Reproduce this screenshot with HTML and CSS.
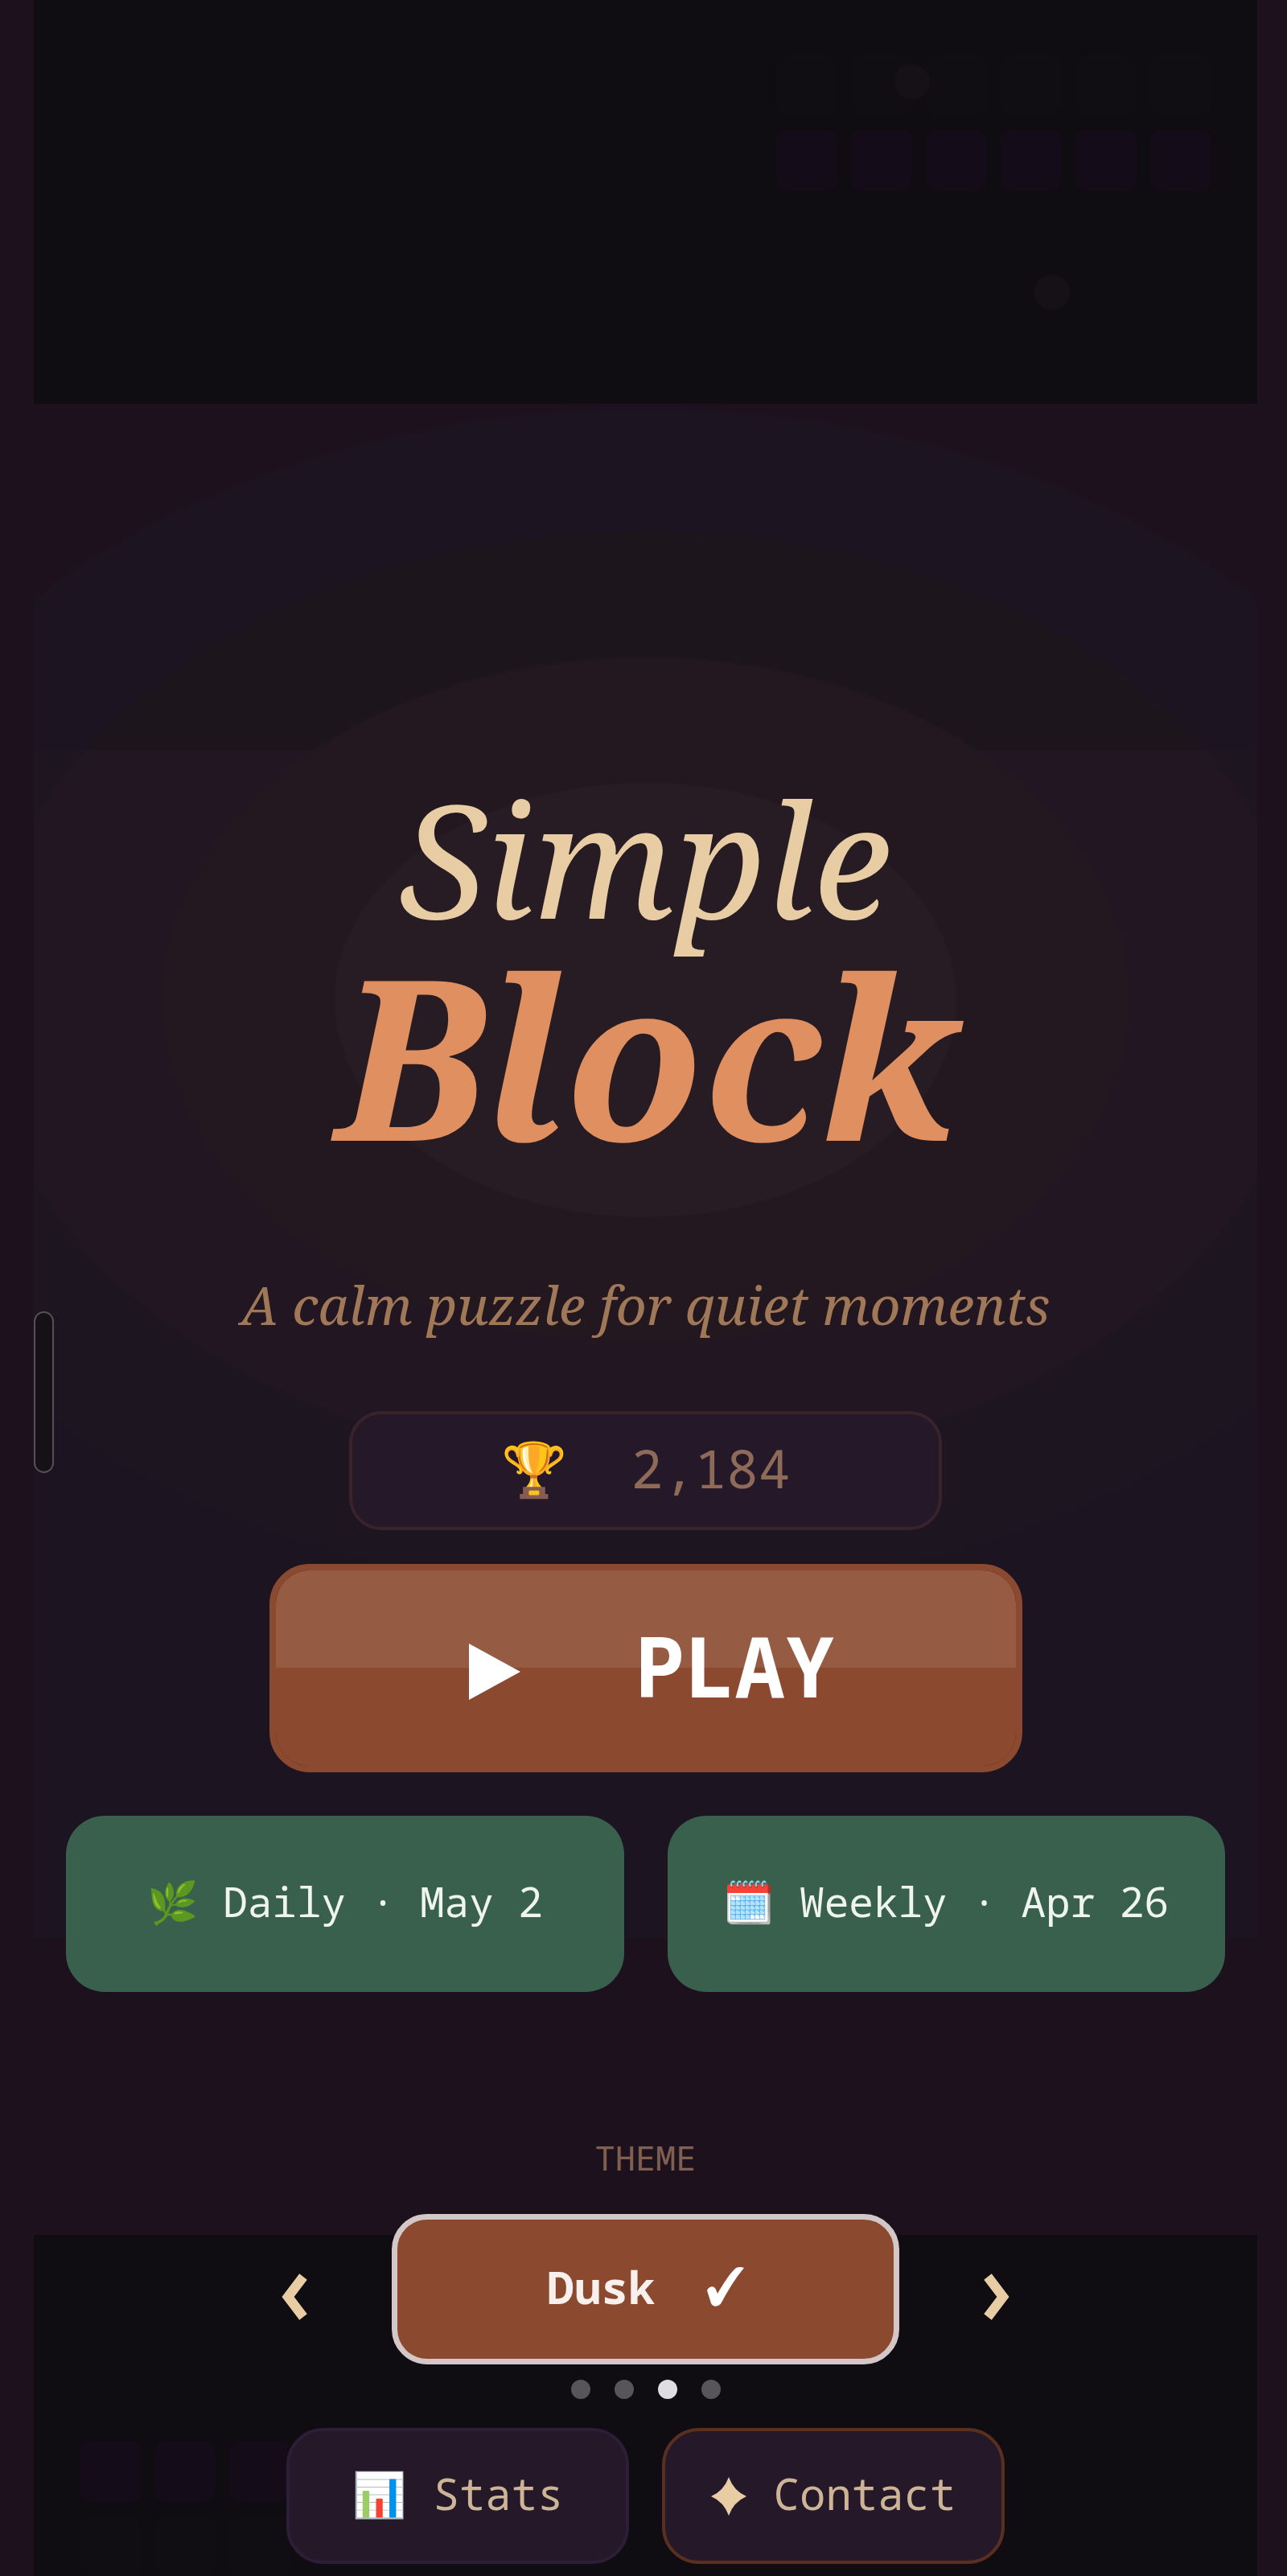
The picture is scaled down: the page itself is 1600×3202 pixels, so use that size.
FILE: index.html
```html
<!DOCTYPE html>
<html lang="en">

<head>
    <meta charset="UTF-8">
    <meta name="viewport" content="width=device-width, initial-scale=1.0">
    <title>Simple Block</title>
    <link rel="stylesheet" href="styles.css">
</head>

<body>
    <main class="stage">
        <!-- Background decoration -->
        <div class="decor" aria-hidden="true">
            <div class="shade shade-top"></div>
            <div class="glow"></div>
            <div class="shade shade-bottom"></div>
            <div class="blocks blocks-top">
                <i></i><i></i><i></i><i></i><i></i><i></i>
                <i class="lit"></i><i class="lit"></i><i class="lit"></i><i class="lit"></i><i class="lit"></i><i class="lit"></i>
            </div>
            <div class="blocks blocks-bottom">
                <i class="lit"></i><i class="lit"></i><i class="lit"></i>
                <i></i><i></i><i></i>
            </div>
            <span class="spark spark-one"></span>
            <span class="spark spark-two"></span>
        </div>
        <div class="handle"></div>

        <!-- Title -->
        <h1 class="title">
            <span class="title-simple">Simple</span>
            <span class="title-block">Block</span>
        </h1>
        <p class="tagline">A calm puzzle for quiet moments</p>

        <!-- Best score -->
        <div class="score">
            <span class="emoji">🏆</span>
            <span>2,184</span>
        </div>

        <button type="button" class="play">
            <svg class="play-icon" viewBox="0 0 64 70"><path d="M0 0L64 35L0 70Z" fill="#fff"/></svg>
            <span>PLAY</span>
        </button>

        <div class="challenges">
            <button type="button" class="challenge"><span class="emoji">🌿</span> Daily · May 2</button>
            <button type="button" class="challenge"><span class="emoji">🗓️</span> Weekly · Apr 26</button>
        </div>

        <!-- Theme picker -->
        <h2 class="theme-label">THEME</h2>
        <div class="theme-picker">
            <button type="button" class="arrow" aria-label="Previous theme">
                <svg viewBox="0 0 32 58"><path d="M27 4L8 29L27 54" fill="none" stroke="#e8cda4" stroke-width="12"/></svg>
            </button>
            <button type="button" class="theme">
                <span>Dusk</span>
                <svg class="check" viewBox="0 0 46 50"><path d="M0 30C3 24 9 24 11 29L13 34C20 22 28 9 36 2Q41 0 46 2C35 15 26 30 18 45C15 51 7 51 5 46Z" fill="#fff"/></svg>
            </button>
            <button type="button" class="arrow" aria-label="Next theme">
                <svg viewBox="0 0 32 58"><path d="M5 4L24 29L5 54" fill="none" stroke="#e8cda4" stroke-width="12"/></svg>
            </button>
        </div>
        <div class="dots">
            <span></span><span></span><span class="active"></span><span></span>
        </div>

        <!-- Footer buttons -->
        <div class="links">
            <button type="button" class="link"><span class="emoji">📊</span><span>Stats</span></button>
            <button type="button" class="link link-contact">
                <svg class="star" viewBox="0 0 44 48"><path d="M22 0Q28 17 44 24Q28 31 22 48Q16 31 0 24Q16 17 22 0Z" fill="#e8cda4"/></svg>
                <span>Contact</span>
            </button>
        </div>
    </main>
</body>

</html>
```

FILE: styles.css
```css
* {
    box-sizing: border-box;
}

body {
    margin: 0;
    background: #1e111e;
    font-family: "Noto Sans Mono", "DejaVu Sans Mono", "Liberation Mono", monospace;
}

button {
    margin: 0;
    padding: 0;
    border: none;
    font-family: inherit;
    cursor: pointer;
}

svg {
    display: block;
}

.stage {
    position: relative;
    display: flex;
    flex-direction: column;
    align-items: center;
    min-height: 100vh;
    margin: 0 37px 0 42px;
    padding: 946px 40px 15px;
}

/* Background decoration */
.decor {
    position: absolute;
    inset: 0;
    overflow: hidden;
}

.shade {
    position: absolute;
    left: 0;
    right: 0;
    background: #100d12;
}

.shade-top {
    top: 0;
    height: 502px;
}

.shade-bottom {
    bottom: 0;
    height: 424px;
}

/* Stepped rings, the lower part is a bit lighter */
.glow {
    position: absolute;
    top: 502px;
    left: 0;
    right: 0;
    height: 1908px;
    background:
        radial-gradient(388px 271px at 50% 741px, #271c24 99%, transparent 100%),
        radial-gradient(604px 428px at 50% 741px, #23181f 99%, transparent 100%),
        radial-gradient(826px 584px at 50% 311px, #221622 99%, transparent 100%) 0 430px no-repeat,
        radial-gradient(1040px 738px at 50% 311px, #1d1621 99%, transparent 100%) 0 430px no-repeat,
        radial-gradient(826px 584px at 50% 741px, #1c161c 99%, transparent 100%),
        linear-gradient(transparent 430px, #1c1421 430px),
        radial-gradient(1040px 738px at 50% 741px, #1c1420 99%, transparent 100%);
}

.blocks {
    position: absolute;
    display: grid;
    gap: 17px;
}

.blocks i {
    width: 76px;
    height: 76px;
    border-radius: 14px;
    background: #110e13;
}

.blocks i.lit {
    background: #150c19;
}

.blocks-top {
    top: 68px;
    right: 57px;
    grid-template-columns: repeat(6, 76px);
}

.blocks-bottom {
    bottom: -1px;
    left: 57px;
    grid-template-columns: repeat(3, 76px);
}

.spark {
    position: absolute;
    width: 44px;
    height: 44px;
    border-radius: 50%;
    background: #161116;
}

.spark-one {
    top: 80px;
    right: 407px;
}

.spark-two {
    top: 341px;
    right: 233px;
}

.handle {
    position: absolute;
    top: 1630px;
    left: 0;
    width: 25px;
    height: 201px;
    border: 2px solid #554f57;
    border-radius: 13px;
    background: #161116;
}

/* Title */
.title {
    position: relative;
    margin: 0;
    font-family: "Noto Serif", "DejaVu Serif", serif;
    font-style: italic;
    text-align: center;
}

.title span {
    display: block;
}

.title-simple {
    font-size: 196px;
    line-height: 240px;
    font-weight: 400;
    color: #e8cda4;
}

.title-block {
    font-size: 278px;
    line-height: 248px;
    font-weight: 700;
    color: #e09060;
}

.tagline {
    position: relative;
    margin: 142px 0 0;
    font-family: "Noto Serif", "DejaVu Serif", serif;
    font-size: 66px;
    line-height: 90px;
    font-style: italic;
    white-space: nowrap;
    color: #a07858;
}

/* Score */
.score {
    position: relative;
    display: flex;
    align-items: center;
    justify-content: center;
    gap: 80px;
    width: 737px;
    height: 148px;
    margin-top: 88px;
    padding-bottom: 8px;
    border: 4px solid #39232a;
    border-radius: 40px;
    background: #251829;
    font-size: 66px;
    color: #8e6b58;
}

/* Buttons */
.play {
    position: relative;
    display: flex;
    align-items: center;
    justify-content: center;
    gap: 142px;
    width: 936px;
    height: 259px;
    margin-top: 42px;
    padding: 0 0 8px 16px;
    border: 8px solid #8b4a2f;
    border-radius: 50px;
    background: linear-gradient(#965b43 121px, #8b4a2f 121px) padding-box #8b4a2f;
    font-size: 104px;
    font-weight: 700;
    color: #fff;
}

.play-icon {
    width: 64px;
    height: 70px;
    margin-top: 16px;
}

.challenges {
    position: relative;
    display: grid;
    grid-template-columns: 1fr 1fr;
    gap: 54px;
    width: 100%;
    margin-top: 54px;
}

.challenge {
    height: 219px;
    padding-bottom: 8px;
    border-radius: 48px;
    background: #38604d;
    font-size: 51px;
    color: #f0f4f0;
}

/* Theme picker */
.theme-label {
    position: relative;
    margin: 176px 0 0;
    font-size: 42px;
    line-height: 60px;
    font-weight: 400;
    color: #806050;
}

.theme-picker {
    position: relative;
    display: flex;
    align-items: center;
    gap: 105px;
    margin-top: 40px;
}

.arrow {
    padding-top: 18px;
    background: none;
}

.arrow svg {
    width: 32px;
    height: 58px;
}

.theme {
    display: flex;
    align-items: center;
    justify-content: center;
    gap: 64px;
    width: 631px;
    height: 187px;
    padding-bottom: 8px;
    border: 7px solid #d3c7c8;
    border-radius: 44px;
    background: #8b4a2f;
    font-size: 56px;
    font-weight: 700;
    color: #f8f0ec;
}

.check {
    width: 46px;
    height: 50px;
}

.dots {
    position: relative;
    display: flex;
    gap: 30px;
    margin-top: 19px;
}

.dots span {
    width: 24px;
    height: 24px;
    border-radius: 50%;
    background: #57545a;
}

.dots .active {
    background: #dedde0;
}

.links {
    position: relative;
    display: flex;
    gap: 41px;
    margin-top: 36px;
}

.link {
    display: flex;
    align-items: center;
    justify-content: center;
    gap: 34px;
    width: 426px;
    height: 169px;
    padding-bottom: 8px;
    border: 4px solid #2d1e38;
    border-radius: 46px;
    background: #251829;
    font-size: 54px;
    color: #cdb496;
}

.link-contact {
    border-color: #59301f;
}

.star {
    width: 44px;
    height: 48px;
    margin-top: 8px;
}
```
